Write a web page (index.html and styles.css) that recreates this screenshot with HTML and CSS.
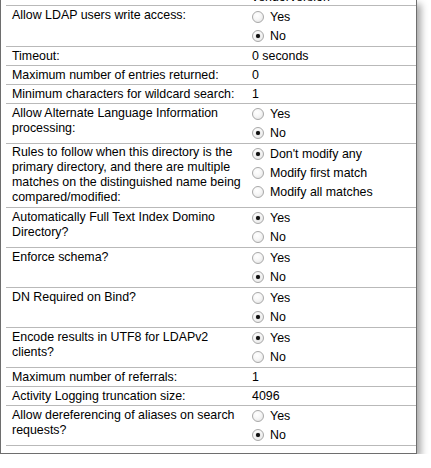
FILE: index.html
```html
<!DOCTYPE html>
<html>
<head>
<meta charset="utf-8">
<link rel="stylesheet" href="styles.css">
</head>
<body>
<div class="frame">
  <div class="panel">
    <div class="clip"><span class="clip-text">vendorversion</span></div>

    <div class="row first">
      <div class="label">Allow LDAP users write access:</div>
      <div class="options">
        <div class="opt"><span class="radio"></span>Yes</div>
        <div class="opt"><span class="radio on"></span>No</div>
      </div>
    </div>

    <div class="row single">
      <div class="label">Timeout:</div>
      <div class="value">0 seconds</div>
    </div>

    <div class="row single">
      <div class="label">Maximum number of entries returned:</div>
      <div class="value">0</div>
    </div>

    <div class="row single">
      <div class="label">Minimum characters for wildcard search:</div>
      <div class="value">1</div>
    </div>

    <div class="row">
      <div class="label">Allow Alternate Language Information processing:</div>
      <div class="options">
        <div class="opt"><span class="radio"></span>Yes</div>
        <div class="opt"><span class="radio on"></span>No</div>
      </div>
    </div>

    <div class="row">
      <div class="label tall">Rules to follow when this directory is the primary directory, and there are multiple matches on the distinguished name being compared/modified:</div>
      <div class="options">
        <div class="opt"><span class="radio on"></span>Don't modify any</div>
        <div class="opt"><span class="radio"></span>Modify first match</div>
        <div class="opt"><span class="radio"></span>Modify all matches</div>
      </div>
    </div>

    <div class="row">
      <div class="label">Automatically Full Text Index Domino Directory?</div>
      <div class="options">
        <div class="opt"><span class="radio on"></span>Yes</div>
        <div class="opt"><span class="radio"></span>No</div>
      </div>
    </div>

    <div class="row">
      <div class="label">Enforce schema?</div>
      <div class="options">
        <div class="opt"><span class="radio"></span>Yes</div>
        <div class="opt"><span class="radio on"></span>No</div>
      </div>
    </div>

    <div class="row">
      <div class="label">DN Required on Bind?</div>
      <div class="options">
        <div class="opt"><span class="radio"></span>Yes</div>
        <div class="opt"><span class="radio on"></span>No</div>
      </div>
    </div>

    <div class="row">
      <div class="label">Encode results in UTF8 for LDAPv2 clients?</div>
      <div class="options">
        <div class="opt"><span class="radio on"></span>Yes</div>
        <div class="opt"><span class="radio"></span>No</div>
      </div>
    </div>

    <div class="row single">
      <div class="label">Maximum number of referrals:</div>
      <div class="value">1</div>
    </div>

    <div class="row single">
      <div class="label">Activity Logging truncation size:</div>
      <div class="value">4096</div>
    </div>

    <div class="row">
      <div class="label">Allow dereferencing of aliases on search requests?</div>
      <div class="options">
        <div class="opt"><span class="radio"></span>Yes</div>
        <div class="opt"><span class="radio on"></span>No</div>
      </div>
    </div>

    <div class="tail"></div>
  </div>
</div>
</body>
</html>
```

FILE: styles.css
```css
html, body {
  margin: 0;
  padding: 0;
  background: #ffffff;
}

body {
  font-family: "Liberation Sans", Arial, sans-serif;
  font-size: 12.4px;
  color: #000000;
}

.frame {
  width: 417px;
}

.panel {
  box-sizing: border-box;
  width: 417px;
  border-left: 1px solid #6e6e6e;
  border-right: 1px solid #6e6e6e;
  border-bottom: 1px solid #6e6e6e;
  padding-left: 5px;
  background: #ffffff;
  box-shadow: 4px 4px 7px rgba(0, 0, 0, 0.35);
}

.clip {
  height: 5px;
  overflow: hidden;
  border-bottom: 1px solid #b9b9b9;
  padding-left: 246px;
}

.clip-text {
  display: block;
  line-height: 18px;
  margin-top: -12px;
}

.row {
  display: grid;
  grid-template-columns: 240px 1fr;
  border-bottom: 1px solid #b9b9b9;
  padding-left: 6px;
}

.label {
  line-height: 15px;
  padding: 2px 4px 2px 0;
}

.label.tall {
  padding: 1px 2px 2px 0;
}

.options {
  display: flex;
  flex-direction: column;
  padding-bottom: 1px;
}

.row.first .options {
  padding-top: 1px;
}

.opt {
  height: 19px;
  display: flex;
  align-items: center;
  gap: 6px;
}

.radio {
  box-sizing: border-box;
  width: 12px;
  height: 12px;
  border-radius: 50%;
  border: 1px solid #a8a8a8;
  background: radial-gradient(circle at 40% 35%, #ffffff 0%, #f6f6f6 45%, #dedede 100%);
  display: flex;
  align-items: center;
  justify-content: center;
  flex: none;
}

.radio.on::after {
  content: "";
  width: 4px;
  height: 4px;
  border-radius: 50%;
  background: #111111;
  box-shadow: 0 0 1px #444;
}

.row.single {
  height: 18px;
}

.row.single .label,
.row.single .value {
  line-height: 18px;
  padding: 0;
}

.tail {
  height: 7px;
}
```
